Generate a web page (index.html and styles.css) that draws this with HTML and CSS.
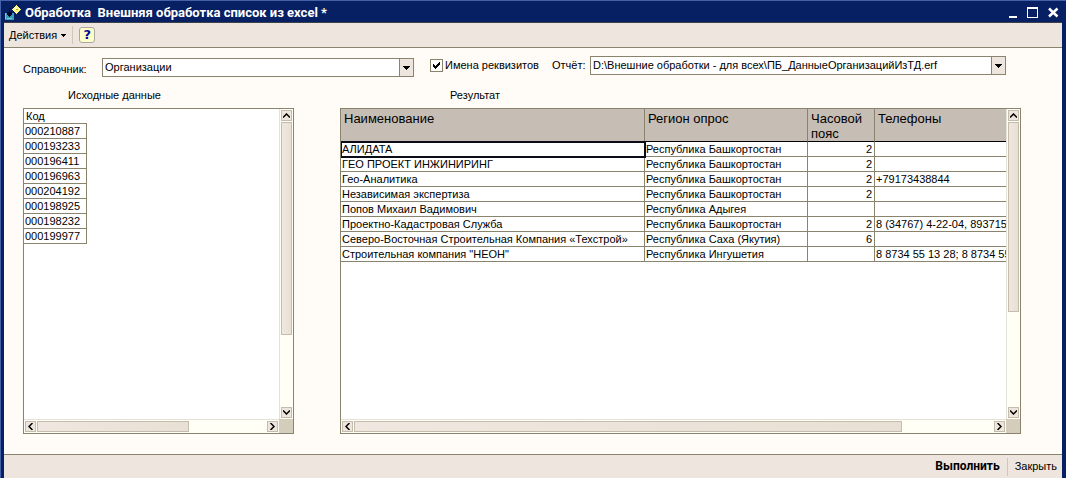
FILE: index.html
```html
<!DOCTYPE html>
<html lang="ru">
<head>
<meta charset="utf-8">
<title>Обработка Внешняя обработка список из excel</title>
<link rel="stylesheet" href="styles.css">
</head>
<body>
<div class="window">
  <header class="titlebar">
    <svg class="app-icon" width="17" height="17" viewBox="0 0 17 17" shape-rendering="crispEdges" aria-hidden="true">
      <path fill="#3c9cb4" d="M1 9h9v7H1z"/>
      <path fill="#6cd0e0" d="M1 9h1v6H1zM3 14h5v1H3z"/>
      <path fill="#000830" d="M5 4h1v1H5zM5 6h1v1H5zM3 8h5v3H7v1H6v1H5v-1H4v-1H3z"/>
      <path fill="#fff68c" d="M12 1h1v1h1v1h1v1h1v1h1v1h-1v1h-1v1h-1v1h-1v1h-1V9h-1V8h-1V7H9V6H8V5h1V4h1V3h1V2h1z"/>
      <path fill="#fffff0" d="M11 4h2v1h-2z"/>
      <path fill="#c8a400" d="M12 5h2v1h-2z"/>
    </svg>
    <h1 class="title">Обработка&nbsp; Внешняя обработка список из excel *</h1>
    <div class="window-buttons">
      <button class="window-button" type="button" aria-label="Свернуть"><svg width="11" height="11" viewBox="0 0 11 11" shape-rendering="crispEdges"><path fill="#fff" d="M3 9h8v2H3z"/></svg></button>
      <button class="window-button" type="button" aria-label="Развернуть"><svg width="11" height="11" viewBox="0 0 11 11" shape-rendering="crispEdges"><path fill="#fff" fill-rule="evenodd" d="M0 0h11v11H0zM1 2v8h9V2z"/></svg></button>
      <button class="window-button" type="button" aria-label="Закрыть окно"><svg width="11" height="11" viewBox="0 0 11 11"><path stroke="#fff" stroke-width="2.500" d="M1 1.500l8.500 8M9.500 1.500l-8.500 8"/></svg></button>
    </div>
  </header>

  <div class="toolbar">
    <button class="menu-button" type="button">Действия
      <svg width="5" height="3" viewBox="0 0 5 3" shape-rendering="crispEdges" aria-hidden="true"><path d="M0 0h5v1H4v1H3v1H2V2H1V1H0z"/></svg>
    </button>
    <span class="separator"></span>
    <button class="help-button" type="button" aria-label="Справка">?</button>
  </div>

  <main class="content">
    <div class="controls">
      <div class="field field-directory">
        <label for="directory">Справочник:</label>
        <div class="combo">
          <select id="directory"><option>Организации</option></select>
          <span class="combo-arrow"><svg width="7" height="4" viewBox="0 0 7 4" shape-rendering="crispEdges"><path d="M0 0h7v1H6v1H5v1H4v1H3V3H2V2H1V1H0z"/></svg></span>
        </div>
      </div>
      <label class="check"><input type="checkbox" checked><span>Имена реквизитов</span></label>
      <div class="field field-report">
        <label for="report">Отчёт:</label>
        <div class="combo">
          <input id="report" type="text" value="D:\Внешние обработки - для всех\ПБ_ДанныеОрганизацийИзТД.erf">
          <button class="combo-arrow" type="button" aria-label="Выбрать отчёт"><svg width="7" height="4" viewBox="0 0 7 4" shape-rendering="crispEdges"><path d="M0 0h7v1H6v1H5v1H4v1H3V3H2V2H1V1H0z"/></svg></button>
        </div>
      </div>
    </div>

    <section class="source">
      <h2 class="caption">Исходные данные</h2>
      <div class="panel">
        <div class="sheet">
          <table class="codes">
            <thead><tr><th scope="col">Код</th></tr></thead>
            <tbody>
              <tr><td>000210887</td></tr>
              <tr><td>000193233</td></tr>
              <tr><td>000196411</td></tr>
              <tr><td>000196963</td></tr>
              <tr><td>000204192</td></tr>
              <tr><td>000198925</td></tr>
              <tr><td>000198232</td></tr>
              <tr><td>000199977</td></tr>
            </tbody>
          </table>
        </div>
        <div class="scroll scroll-v">
          <button class="scroll-button" type="button" aria-label="Вверх"><svg width="7" height="5" viewBox="0 0 7 5"><path class="chevron" d="M0 4.500l3.500-3.500L7 4.500"/></svg></button>
          <div class="track"><div class="thumb" style="height:75%"></div></div>
          <button class="scroll-button" type="button" aria-label="Вниз"><svg width="7" height="5" viewBox="0 0 7 5"><path class="chevron" d="M0 .5L3.500 4 7 .5"/></svg></button>
        </div>
        <div class="scroll scroll-h">
          <button class="scroll-button" type="button" aria-label="Влево"><svg width="5" height="7" viewBox="0 0 5 7"><path class="chevron" d="M4.500 0L1 3.500 4.500 7"/></svg></button>
          <div class="track"><div class="thumb" style="width:66.500%"></div></div>
          <button class="scroll-button" type="button" aria-label="Вправо"><svg width="5" height="7" viewBox="0 0 5 7"><path class="chevron" d="M.5 0L4 3.500 .5 7"/></svg></button>
        </div>
        <div class="corner"></div>
      </div>
    </section>

    <section class="result">
      <h2 class="caption">Результат</h2>
      <div class="panel">
        <div class="sheet">
          <table class="grid">
            <colgroup><col class="col-name"><col class="col-region"><col class="col-zone"><col></colgroup>
            <thead>
              <tr><th scope="col">Наименование</th><th scope="col">Регион опрос</th><th scope="col">Часовой пояс</th><th scope="col">Телефоны</th></tr>
            </thead>
            <tbody>
              <tr><td class="selected">АЛИДАТА</td><td>Республика Башкортостан</td><td class="number">2</td><td></td></tr>
              <tr><td>ГЕО ПРОЕКТ ИНЖИНИРИНГ</td><td>Республика Башкортостан</td><td class="number">2</td><td></td></tr>
              <tr><td>Гео-Аналитика</td><td>Республика Башкортостан</td><td class="number">2</td><td>+79173438844</td></tr>
              <tr><td>Независимая экспертиза</td><td>Республика Башкортостан</td><td class="number">2</td><td></td></tr>
              <tr><td>Попов Михаил Вадимович</td><td>Республика Адыгея</td><td class="number"></td><td></td></tr>
              <tr><td>Проектно-Кадастровая Служба</td><td>Республика Башкортостан</td><td class="number">2</td><td>8 (34767) 4-22-04, 893715</td></tr>
              <tr><td>Северо-Восточная Строительная Компания «Техстрой»</td><td>Республика Саха (Якутия)</td><td class="number">6</td><td></td></tr>
              <tr><td>Строительная компания "НЕОН"</td><td>Республика Ингушетия</td><td class="number"></td><td>8 8734 55 13 28; 8 8734 55</td></tr>
            </tbody>
          </table>
        </div>
        <div class="scroll scroll-v">
          <button class="scroll-button" type="button" aria-label="Вверх"><svg width="7" height="5" viewBox="0 0 7 5"><path class="chevron" d="M0 4.500l3.500-3.500L7 4.500"/></svg></button>
          <div class="track"><div class="thumb" style="height:67%"></div></div>
          <button class="scroll-button" type="button" aria-label="Вниз"><svg width="7" height="5" viewBox="0 0 7 5"><path class="chevron" d="M0 .5L3.500 4 7 .5"/></svg></button>
        </div>
        <div class="scroll scroll-h">
          <button class="scroll-button" type="button" aria-label="Влево"><svg width="5" height="7" viewBox="0 0 5 7"><path class="chevron" d="M4.500 0L1 3.500 4.500 7"/></svg></button>
          <div class="track"><div class="thumb" style="width:85.700%"></div></div>
          <button class="scroll-button" type="button" aria-label="Вправо"><svg width="5" height="7" viewBox="0 0 5 7"><path class="chevron" d="M.5 0L4 3.500 .5 7"/></svg></button>
        </div>
        <div class="corner"></div>
      </div>
    </section>
  </main>

  <footer class="actions">
    <button class="action action-main" type="button">Выполнить</button>
    <span class="separator"></span>
    <button class="action" type="button">Закрыть</button>
  </footer>
</div>
</body>
</html>
```

FILE: styles.css
```css
:root {
  --line: #8a846e;
  --bar: #eee6de;
  --navy: #071f63;
  --edge: #c4bcac;
}

* { box-sizing: border-box; }

body {
  margin: 0;
  font: 11px/15px "Liberation Sans", Arial, sans-serif;
  color: #000;
}

button, input, select {
  margin: 0;
  padding: 0;
  border: 0;
  border-radius: 0;
  background: none;
  font: inherit;
  color: inherit;
}

h1, h2 { margin: 0; font: inherit; }

svg { display: block; }

.window {
  display: flex;
  flex-direction: column;
  min-height: 100vh;
  padding: 0 4px;
  background: var(--navy);
  box-shadow: inset 1px 1px #4562a8;
}

.titlebar {
  display: flex;
  align-items: center;
  gap: 4px;
  height: 23px;
  padding: 3px 3px 0 0;
  border-bottom: 1px solid #3c4048;
  color: #fff;
}

.title {
  flex: 1;
  font: bold 13px/16px Roboto, Tahoma, sans-serif;
  white-space: nowrap;
}

.window-buttons { display: flex; gap: 10px; }

.toolbar {
  display: flex;
  align-items: center;
  height: 25px;
  padding-left: 5px;
  background: var(--bar);
  border-bottom: 1px solid var(--line);
}

.menu-button { display: flex; align-items: center; gap: 4px; }

.separator {
  width: 1px;
  height: 18px;
  margin: 0 6px;
  background: #d0c8b4;
}

.help-button {
  width: 16px;
  height: 16px;
  border: 1px solid #a8a8a0;
  border-radius: 3px;
  background: #ffffcc;
  font: bold 13px/14px "DejaVu Sans", sans-serif;
  color: #000c90;
}

.content {
  flex: 1;
  display: grid;
  grid-template-columns: 271px minmax(0, 1fr);
  grid-template-rows: auto 1fr;
  column-gap: 46px;
  padding: 8px 41px 20px 19px;
  background: #fffcf7;
}

.controls {
  grid-column: 1 / -1;
  display: flex;
  align-items: flex-start;
  padding-right: 15px;
}

.field { display: flex; align-items: center; }

.field-directory { width: 391px; padding-top: 2px; }

.field-directory label { width: 79px; padding-top: 3px; }

.field-report { flex: 1; }

.field-report label { width: 38px; }

.combo {
  flex: 1;
  display: flex;
  height: 19px;
  border: 1px solid var(--line);
  background: #fff;
}

.combo select,
.combo input {
  flex: 1;
  min-width: 0;
  padding-left: 2px;
  appearance: none;
  outline: 0;
}

.combo-arrow {
  display: flex;
  align-items: center;
  justify-content: center;
  width: 14px;
  border-left: 1px solid var(--line);
  background: var(--bar);
}

.check {
  display: flex;
  align-items: center;
  gap: 2px;
  width: 122px;
  height: 19px;
  margin-left: 16px;
  white-space: nowrap;
}

.check input {
  width: 13px;
  height: 13px;
  border: 1px solid var(--line);
  background: #fff url("data:image/svg+xml,%3Csvg xmlns='http://www.w3.org/2000/svg' viewBox='0 0 11 11' shape-rendering='crispEdges'%3E%3Cpath d='M2 4h1v1h1v1h1V5h1V4h1V3h1V2h1v3H8v1H7v1H6v1H5v1H4V8H3V7H2z'/%3E%3C/svg%3E");
  appearance: none;
}

.source, .result {
  display: flex;
  flex-direction: column;
  min-width: 0;
}

.caption { padding: 11px 0 5px 45px; }

.result .caption { padding-left: 110px; }

.panel {
  flex: 1;
  display: grid;
  grid-template: minmax(0, 1fr) 14px / minmax(0, 1fr) 14px;
  border: 1px solid var(--line);
  background: #fff;
}

.sheet { overflow: hidden; }

table { border-collapse: separate; border-spacing: 0; table-layout: fixed; }

th, td {
  height: 15px;
  padding: 0 1px;
  border: 1px solid var(--line);
  border-width: 0 1px 1px 0;
  font: 11px/14px "Liberation Sans", Arial, sans-serif;
  text-align: left;
  white-space: nowrap;
}

.codes { width: 63px; }

.codes th { padding-left: 2px; border-right: 0; }

.grid { width: 100%; }

.col-name { width: 304px; }

.col-region { width: 163px; }

.col-zone { width: 67px; }

.grid th {
  height: 33px;
  padding: 2px 3px 0;
  border-bottom-color: #000;
  background: #c6bdb4;
  font: 13px/15px "Liberation Sans", Arial, sans-serif;
  vertical-align: top;
  white-space: normal;
}

.grid tr > :last-child { border-right: 0; }

.grid .number { padding-right: 2px; text-align: right; }

.grid .selected { outline: 2px solid #0a0c18; outline-offset: -1px; }

.scroll { display: flex; gap: 1px; background: #fffff6; }

.scroll-v {
  flex-direction: column;
  padding: 1px;
  border-left: 1px solid #e4e2d8;
}

.scroll-h { padding: 1px; border-top: 1px solid #e4e2d8; }

.scroll-button {
  flex: none;
  display: flex;
  align-items: center;
  justify-content: center;
  width: 11px;
  height: 11px;
  border: 1px solid var(--edge);
  background: var(--bar);
}

.chevron { fill: none; stroke: #000; stroke-width: 1.500; }

.track { flex: 1; min-height: 0; }

.thumb {
  height: 100%;
  border: 1px solid var(--edge);
  background: linear-gradient(90deg, #f0e8e0, #e8e0d4);
}

.corner { background: #d5cdbc; }

.actions {
  display: flex;
  align-items: center;
  justify-content: flex-end;
  gap: 1px;
  height: 24px;
  padding-right: 5px;
  border-top: 1px solid var(--line);
  background: var(--bar);
}

.action-main { font: bold 12px/15px Roboto, Tahoma, sans-serif; }
```
